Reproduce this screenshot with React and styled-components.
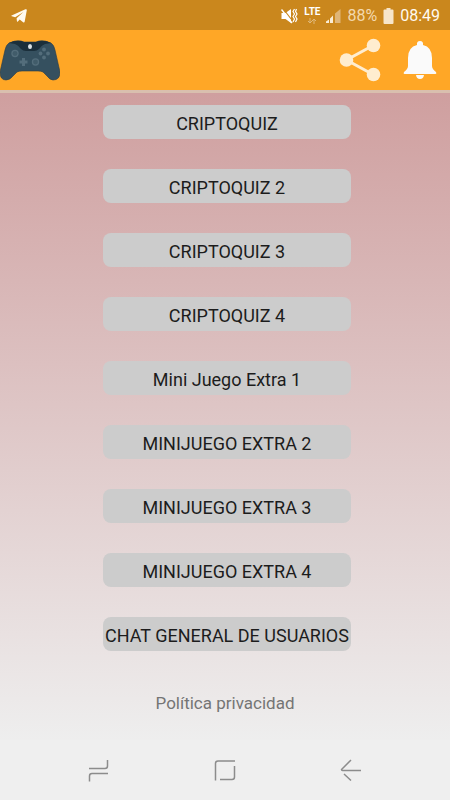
import React from "react";
import styled, { createGlobalStyle } from "styled-components";

const games = [
  "CRIPTOQUIZ",
  "CRIPTOQUIZ 2",
  "CRIPTOQUIZ 3",
  "CRIPTOQUIZ 4",
  "Mini Juego Extra 1",
  "MINIJUEGO EXTRA 2",
  "MINIJUEGO EXTRA 3",
  "MINIJUEGO EXTRA 4",
  "CHAT GENERAL DE USUARIOS",
];

const TelegramIcon = () => (
  <svg width="16" height="14" viewBox="0 0 16 14" fill="#fffaf0">
    <path d="M0.6 6.4 L14.4 0.3 Q16 -0.2 15.8 1.3 L13.7 12.6 Q13.4 14 12.1 13.2 L8.7 10.6 L6.9 12.4 Q6 13 5.9 12 L5.6 9.3 L12.4 3 L4.2 8.2 L0.8 7.2 Q-0.2 6.8 0.6 6.4 Z" />
  </svg>
);

const MuteIcon = () => (
  <svg width="17" height="16" viewBox="0 0 17 16">
    <path d="M0.5 5 H4.5 L10 1 V15 L4.5 11 H0.5 Z" fill="#fff" />
    <path d="M2 0.5 L12 13.5" stroke="#ca871d" strokeWidth="1.2" />
    <path d="M0.5 1.5 L11 15" stroke="#fff" strokeWidth="1.4" />
    <path
      d="M13.5 1 L12 3.5 L13.5 6 L12 8.5 L13.5 11 L12 14 M15.5 1 L14.5 3.5 L16 6 L14.5 8.5 L16 11 L14.5 14"
      stroke="#fff"
      strokeWidth="1.2"
      fill="none"
    />
  </svg>
);

const DataArrows = () => (
  <svg width="10" height="6" viewBox="0 0 10 6" fill="none" stroke="#dfb87b">
    <path d="M3 0 V5 M1 3 L3 5 L5 3 M7 6 V1 M5 3 L7 1 L9 3" />
  </svg>
);

const SignalIcon = () => (
  <svg width="15" height="14" viewBox="0 0 15 14">
    <path d="M0 12.5 L3 10.5 V14 H0 Z M4 9.5 L7 6.5 V14 H4 Z" fill="#f9ecd6" />
    <path d="M9 4.5 L14.5 0 V14 H9 Z" fill="#dfb578" />
  </svg>
);

const BatteryIcon = () => (
  <svg width="11" height="16" viewBox="0 0 11 16" fill="#f7e5c9">
    <path d="M3.5 0 H7.5 V1.5 H9.5 Q10.5 1.5 10.5 2.5 V15 Q10.5 16 9.5 16 H1.5 Q0.5 16 0.5 15 V2.5 Q0.5 1.5 1.5 1.5 H3.5 Z" />
  </svg>
);

const GamepadIcon = () => (
  <svg width="60" height="41" viewBox="0 0 60 41">
    <path
      d="M9 3 Q15 0 21 1 L24 2 H36 L39 1 Q45 0 51 3 Q54 5 55 10 L60 32 Q60 40 53 40 Q50 40 47 36 L43 32 Q41 31 38 31 H22 Q19 31 17 32 L13 36 Q10 40 6 40 Q0 40 0 32 L5 10 Q6 5 9 3 Z"
      fill="#35505f"
      stroke="#263c49"
      strokeWidth="0.6"
    />
    <path
      d="M9 3 Q15 0 21 1 L24 2 H36 L39 1 Q45 0 51 3 L45 4 Q42 5 39 9 Q37 11 34 11 H26 Q23 11 21 9 Q18 5 15 4 Z"
      fill="#1b2f3b"
    />
    <ellipse cx="30" cy="6.5" rx="2" ry="2.5" fill="#dce4e8" />
    <g fill="#536d7b">
      <circle cx="15" cy="13.5" r="3.7" />
      <circle cx="35.5" cy="22" r="3.7" />
      <path d="M22 18 H25 V20.5 H27.5 V23.5 H25 V26 H22 V23.5 H19.5 V20.5 H22 Z" />
      <circle cx="44" cy="9.5" r="1.9" />
      <circle cx="40.5" cy="13.5" r="1.9" />
      <circle cx="48" cy="13.5" r="1.9" />
      <circle cx="44" cy="17.5" r="1.9" />
    </g>
    <g fill="#415c6a">
      <circle cx="15" cy="13.5" r="2.4" />
      <circle cx="35.5" cy="22" r="2.4" />
    </g>
  </svg>
);

const ShareIcon = () => (
  <svg width="42" height="44" viewBox="0 0 42 44" fill="#ffedcf">
    <path d="M34 7.5 L7.5 22 L34 36.5" fill="none" stroke="#ffedcf" strokeWidth="3" />
    <circle cx="34.5" cy="7.5" r="6.8" />
    <circle cx="7.5" cy="22" r="6.8" />
    <circle cx="34.5" cy="36.5" r="6.8" />
  </svg>
);

const BellIcon = () => (
  <svg width="34" height="38" viewBox="0 0 34 38" fill="#fafafa">
    <path d="M14 4 Q13.5 0 17 0 Q20.5 0 20 4 Q29 6 29 17 V25 Q29 28 33 31 Q34 33 32.5 33 H1.5 Q0 33 1 31 Q5 28 5 25 V17 Q5 6 14 4 Z" />
    <path d="M13 34 H21 Q20.5 38 17 38 Q13.5 38 13 34 Z" />
  </svg>
);

const RecentsIcon = () => (
  <svg width="22" height="24" viewBox="0 0 22 24">
    <path d="M19.5 2 V8 Q19.5 10.5 17 10.5 H1 M1.5 23.5 V18 Q1.5 15.5 4 15.5 H20" />
  </svg>
);

const HomeIcon = () => (
  <svg width="22" height="22" viewBox="0 0 22 22">
    <path d="M1.5 21.5 V4.5 Q1.5 2 4 2 H21 M20.5 7 V18 Q20.5 20.5 18 20.5 H6" />
  </svg>
);

const BackIcon = () => (
  <svg width="22" height="22" viewBox="0 0 22 22">
    <path d="M11 1 L1.5 10.5 Q1.5 11.5 2.5 11.5 H21 M4 15 L11 21.5" />
  </svg>
);

const App = () => {
  return (
    <Screen>
      <GlobalStyle />
      <StatusBar>
        <TelegramIcon />
        <StatusGroup>
          <MuteIcon />
          <Network>
            <span>LTE</span>
            <DataArrows />
          </Network>
          <SignalIcon />
          <StatusText $dim>88%</StatusText>
          <BatteryIcon />
          <StatusText>08:49</StatusText>
        </StatusGroup>
      </StatusBar>
      <Header>
        <GamepadIcon />
        <Actions>
          <IconButton aria-label="Compartir">
            <ShareIcon />
          </IconButton>
          <IconButton aria-label="Notificaciones">
            <BellIcon />
          </IconButton>
        </Actions>
      </Header>
      <Content>
        <Menu>
          {games.map((game) => (
            <MenuButton key={game}>{game}</MenuButton>
          ))}
        </Menu>
        <PrivacyLink href="#privacidad">Política privacidad</PrivacyLink>
      </Content>
      <NavBar>
        <IconButton aria-label="Recientes">
          <RecentsIcon />
        </IconButton>
        <IconButton aria-label="Inicio">
          <HomeIcon />
        </IconButton>
        <IconButton aria-label="Atrás">
          <BackIcon />
        </IconButton>
      </NavBar>
    </Screen>
  );
};

export default App;

const GlobalStyle = createGlobalStyle`
  * {
    box-sizing: border-box;
  }
  body {
    margin: 0;
    font-family: Roboto, sans-serif;
  }
  svg {
    display: block;
    flex-shrink: 0;
  }
`;

const Screen = styled.div`
  display: flex;
  flex-direction: column;
  min-height: 100vh;
`;

const StatusBar = styled.div`
  display: flex;
  align-items: center;
  justify-content: space-between;
  height: 30px;
  padding: 2px 10px 0 11px;
  background: #ca871d;
`;

const StatusGroup = styled.div`
  display: flex;
  align-items: center;
  gap: 6px;
`;

const Network = styled.div`
  display: flex;
  flex-direction: column;
  align-items: center;
  gap: 2px;
  color: #fff;
  font-size: 10px;
  font-weight: 700;
  line-height: 8px;
`;

const StatusText = styled.span`
  color: ${({ $dim }) => ($dim ? "#f3d9ae" : "#fffaf0")};
  font-size: 16px;
  line-height: 20px;
`;

const Header = styled.header`
  display: flex;
  align-items: center;
  justify-content: space-between;
  height: 63px;
  padding-right: 13px;
  background: #ffa726;
  border-bottom: 3px solid #d9bfae;
`;

const Actions = styled.div`
  display: flex;
  align-items: center;
  gap: 22px;
`;

const IconButton = styled.button`
  padding: 0;
  border: none;
  background: none;
  cursor: pointer;
`;

const Content = styled.main`
  display: flex;
  flex: 1;
  flex-direction: column;
  align-items: center;
  gap: 41px;
  padding: 12px 0 24px;
  background: linear-gradient(#cf9f9f, #eeeeee);
`;

const Menu = styled.div`
  display: grid;
  gap: 30px;
  padding-left: 4px;
`;

const MenuButton = styled.button`
  height: 34px;
  padding: 2px 2px 0;
  border: none;
  border-radius: 8px;
  background: #cccccc;
  color: #1c1c1c;
  font-family: inherit;
  font-size: 18px;
  cursor: pointer;
`;

const PrivacyLink = styled.a`
  color: #757575;
  font-size: 17px;
  line-height: 22px;
  text-decoration: none;
`;

const NavBar = styled.nav`
  display: flex;
  align-items: center;
  justify-content: center;
  gap: 104px;
  height: 60px;
  background: #efefef;
  svg {
    fill: none;
    stroke: #8c8c8c;
    stroke-width: 1.5;
  }
`;
